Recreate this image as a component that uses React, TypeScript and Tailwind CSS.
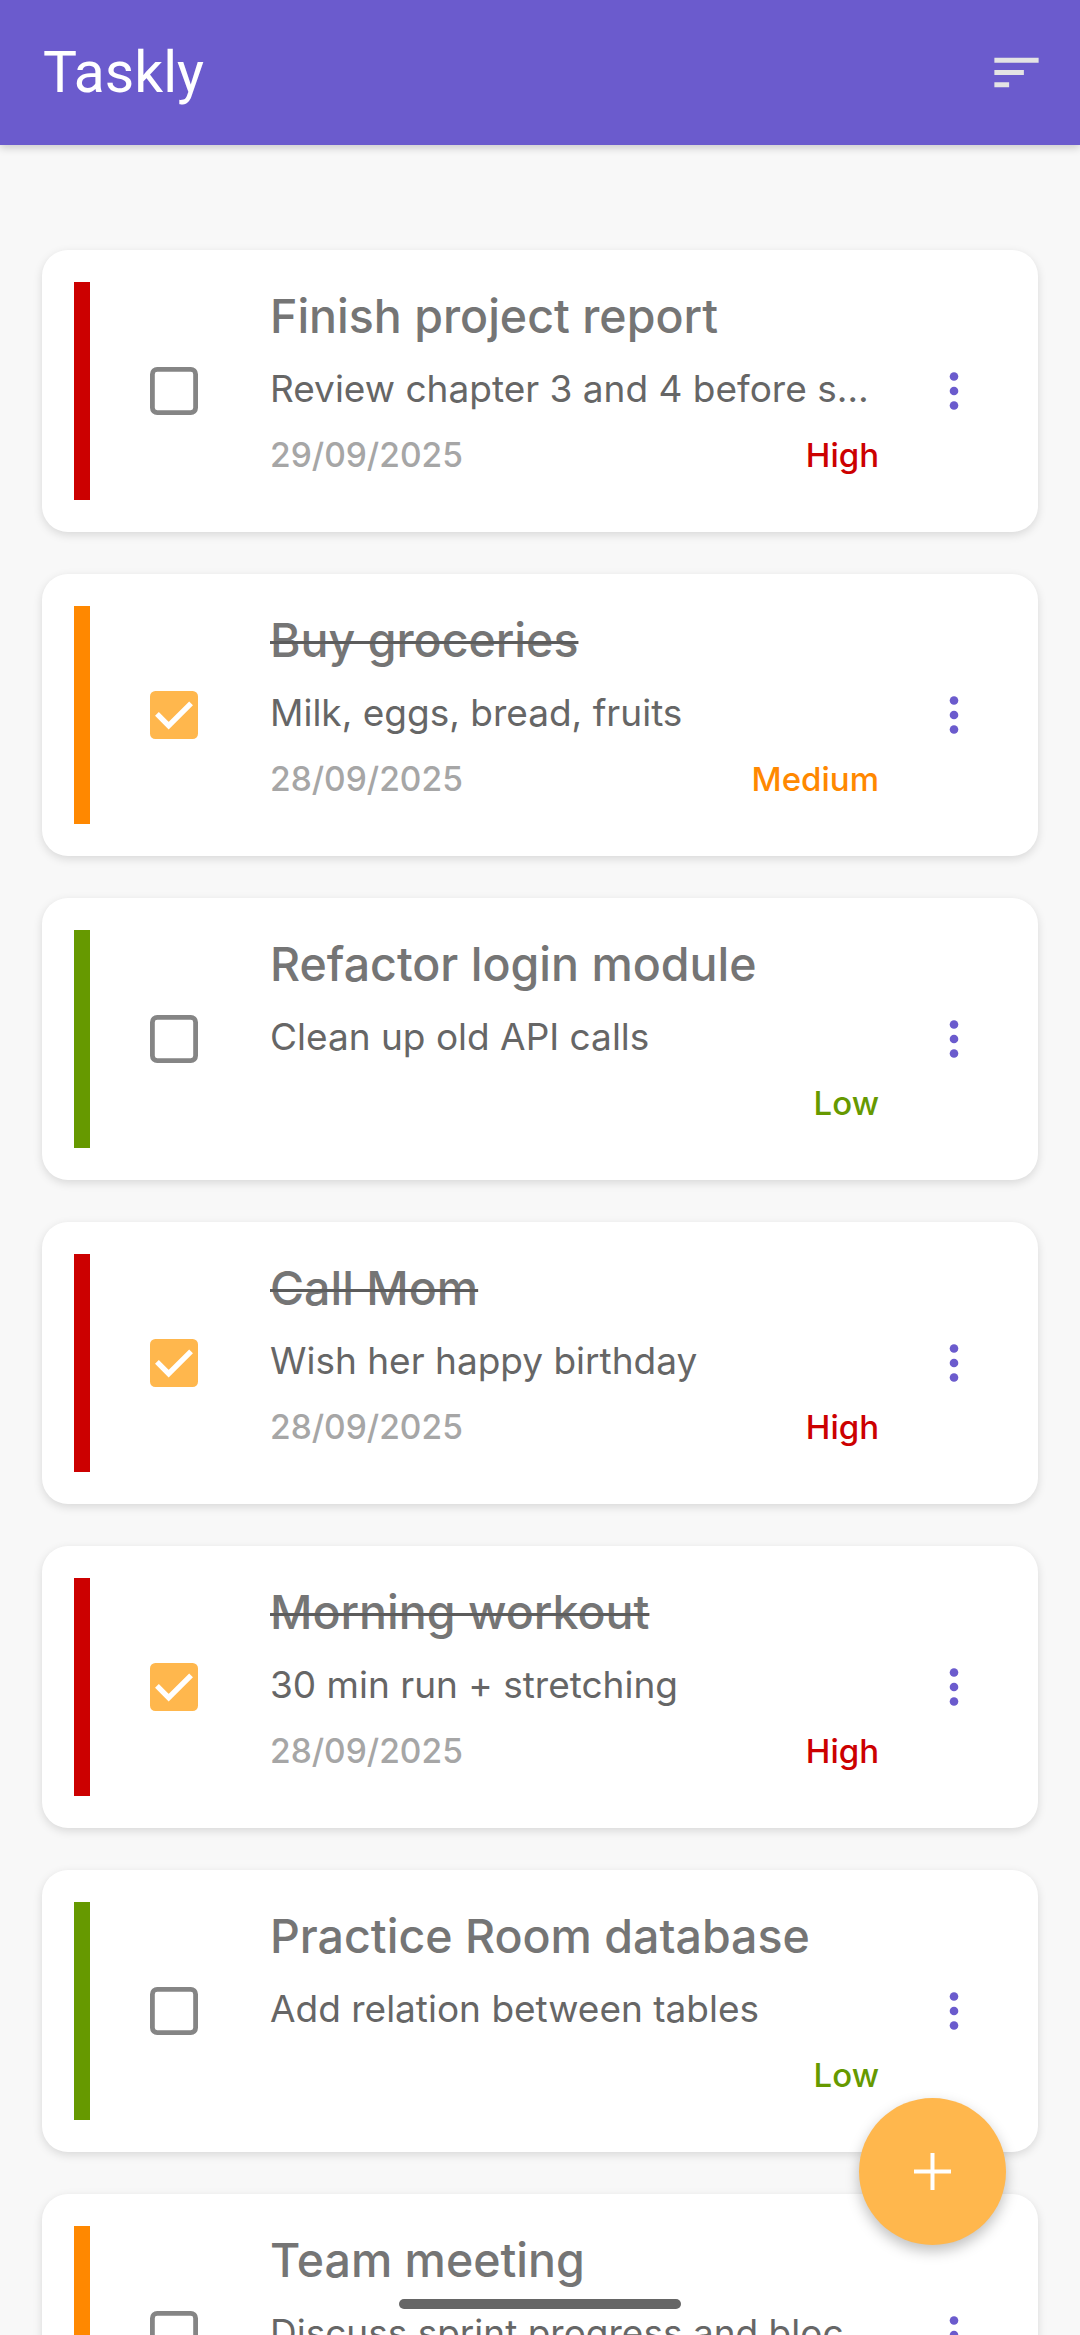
type Priority = "High" | "Medium" | "Low";

type Task = {
  title: string;
  note: string;
  date: string;
  priority: Priority;
  done: boolean;
};

const tasks: Task[] = [
  { title: "Finish project report", note: "Review chapter 3 and 4 before submitting", date: "29/09/2025", priority: "High", done: false },
  { title: "Buy groceries", note: "Milk, eggs, bread, fruits", date: "28/09/2025", priority: "Medium", done: true },
  { title: "Refactor login module", note: "Clean up old API calls", date: "", priority: "Low", done: false },
  { title: "Call Mom", note: "Wish her happy birthday", date: "28/09/2025", priority: "High", done: true },
  { title: "Morning workout", note: "30 min run + stretching", date: "28/09/2025", priority: "High", done: true },
  { title: "Practice Room database", note: "Add relation between tables", date: "", priority: "Low", done: false },
  { title: "Team meeting", note: "Discuss sprint progress and blockers", date: "30/09/2025", priority: "Medium", done: false },
];

const barColor: Record<Priority, string> = {
  High: "bg-[#cc0000]",
  Medium: "bg-[#ff8800]",
  Low: "bg-[#669900]",
};

const textColor: Record<Priority, string> = {
  High: "text-[#cc0000]",
  Medium: "text-[#ff8800]",
  Low: "text-[#669900]",
};

function Checkbox({ checked }: { checked: boolean }) {
  if (checked) {
    return (
      <svg width="48" height="48" viewBox="0 0 18 18" className="shrink-0">
        <rect x="0" y="0" width="18" height="18" rx="2" fill="#ffb74d" />
        <path d="M2.6 8.6 L7 13 L15.4 4.6" fill="none" stroke="#fff" strokeWidth="2" />
      </svg>
    );
  }
  return (
    <svg width="48" height="48" viewBox="0 0 18 18" className="shrink-0">
      <rect x="0.9" y="0.9" width="16.2" height="16.2" rx="1.8" fill="none" stroke="#858585" strokeWidth="1.8" />
    </svg>
  );
}

function MoreIcon() {
  return (
    <svg width="24" height="48" viewBox="0 0 24 48" className="shrink-0">
      <circle cx="12" cy="9.5" r="4.3" fill="#6b5bcd" />
      <circle cx="12" cy="24" r="4.3" fill="#6b5bcd" />
      <circle cx="12" cy="38.5" r="4.3" fill="#6b5bcd" />
    </svg>
  );
}

function TaskCard({ task }: { task: Task }) {
  return (
    <div className="flex h-[282px] shrink-0 items-center rounded-[26px] bg-white pl-[32px] shadow-[0_3px_10px_rgba(0,0,0,0.13)]">
      <div className={`h-[218px] w-[16px] shrink-0 ${barColor[task.priority]}`} />
      <div className="ml-[60px]">
        <Checkbox checked={task.done} />
      </div>
      <div className="ml-[72px] flex w-[609px] flex-col pb-[9px]">
        <div
          className={`mb-[8px] truncate text-[46.5px] font-medium leading-[63px] text-[#757575] ${
            task.done ? "line-through decoration-[#5c5c5c] decoration-[3px]" : ""
          }`}
        >
          {task.title}
        </div>
        <div className="truncate text-[37px] leading-[66px] text-[#666666]">{task.note}</div>
        <div className="flex h-[66px] items-center justify-between font-medium leading-[66px]">
          <span className="text-[33.5px] text-[#a6a6a6]">{task.date}</span>
          <span className={`text-[33px] ${textColor[task.priority]}`}>{task.priority}</span>
        </div>
      </div>
      <div className="ml-[63px]">
        <MoreIcon />
      </div>
    </div>
  );
}

export default function App() {
  return (
    <div className="relative h-[2335px] w-[1080px] overflow-hidden bg-[#f8f8f8] font-['Inter',sans-serif]">
      <header className="relative z-10 flex h-[145px] items-center justify-between bg-[#6b5bcd] pl-[43px] pr-[34px] shadow-[0_3px_8px_rgba(0,0,0,0.18)]">
        <h1 className="font-['Roboto',sans-serif] text-[57px] font-normal text-white">Taskly</h1>
        <svg width="59" height="59" viewBox="0 0 24 24">
          <path d="M3 18h6v-2H3v2zM3 6v2h18V6H3zm0 7h12v-2H3v2z" fill="#e4e4e4" />
        </svg>
      </header>

      <main className="flex flex-col gap-[42px] px-[42px] pt-[105px]">
        {tasks.map((t) => (
          <TaskCard key={t.title} task={t} />
        ))}
      </main>

      <button className="absolute left-[859px] top-[2098px] flex h-[147px] w-[147px] items-center justify-center rounded-full bg-[#ffb74d] shadow-[0_6px_14px_rgba(0,0,0,0.25)]">
        <svg width="37" height="37" viewBox="0 0 37 37">
          <path d="M18.5 0v37M0 18.5h37" stroke="#fff" strokeWidth="4" />
        </svg>
      </button>

      <div className="absolute left-[399px] top-[2299px] h-[10px] w-[282px] rounded-full bg-[#666666]" />
    </div>
  );
}
